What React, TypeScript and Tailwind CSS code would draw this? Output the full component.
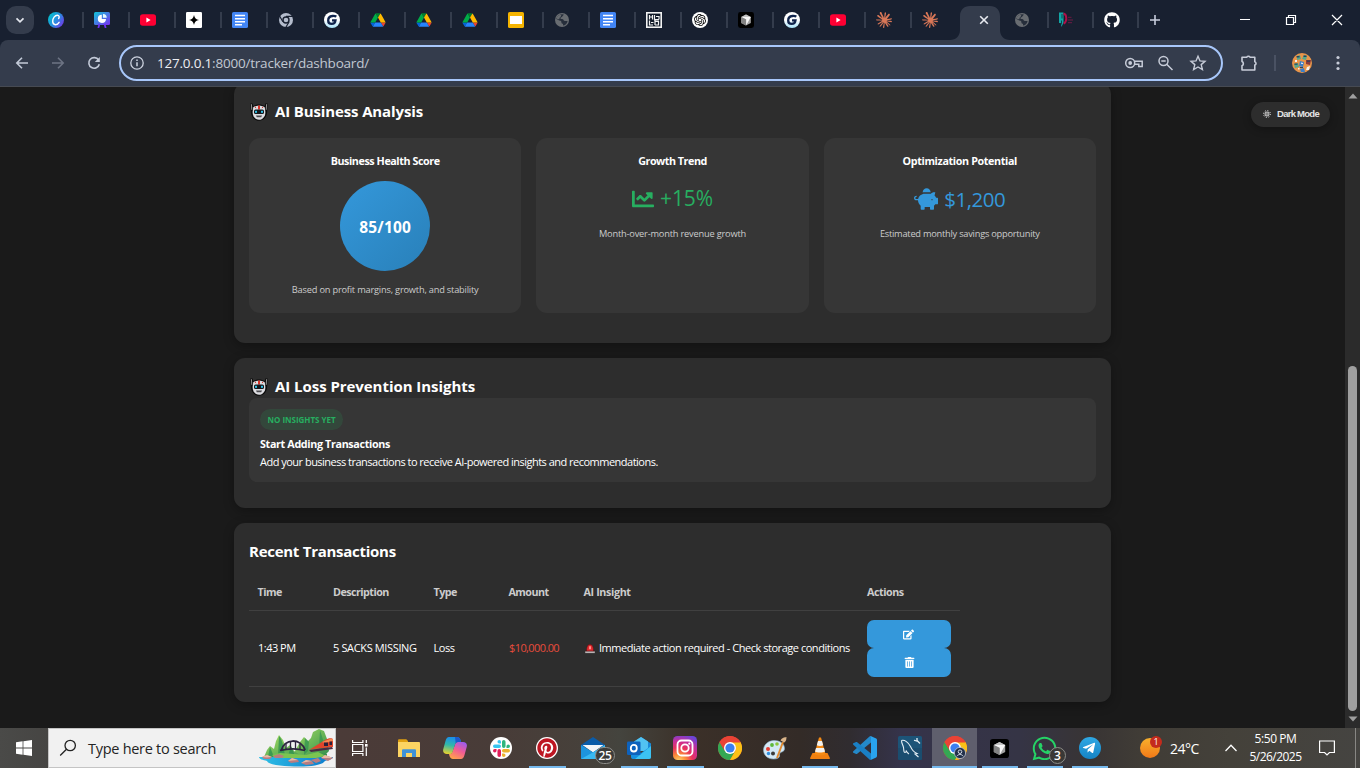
import type { ReactNode } from "react";
import { FaChartLine, FaPiggyBank, FaEdit, FaTrashAlt, FaGithub, FaPinterest, FaWhatsapp, FaTelegramPlane } from "react-icons/fa";
import { SiOpenai, SiClaude } from "react-icons/si";

/* ---------- favicons ---------- */

function Canva() {
  return (
    <svg viewBox="0 0 16 16" className="size-4">
      <defs>
        <linearGradient id="canva" x1="0" y1="0.2" x2="1" y2="0.9">
          <stop offset="0" stopColor="#00c4cc" />
          <stop offset="0.5" stopColor="#2a8be0" />
          <stop offset="1" stopColor="#7d2ae8" />
        </linearGradient>
      </defs>
      <circle cx="8" cy="8" r="8" fill="url(#canva)" />
      <path d="M10.600 6.500c1.100-1.400.6-3.200-1.200-3.200C6.900 3.300 4.700 6.200 4.700 9.300c0 2.200 1.100 3.400 2.700 3.400 1.700 0 2.900-1 3.700-2.400" fill="none" stroke="#fff" strokeWidth="1.400" strokeLinecap="round" />
    </svg>
  );
}

function Presentation() {
  return (
    <svg viewBox="0 0 16 16" className="size-4">
      <defs>
        <linearGradient id="pres" x1="0" y1="0" x2="1" y2="1">
          <stop offset="0" stopColor="#12c8d8" />
          <stop offset="1" stopColor="#7a2cf0" />
        </linearGradient>
      </defs>
      <rect width="16" height="13" rx="1.500" fill="url(#pres)" />
      <path d="M5.500 12 4.300 16M10.500 12l1.200 4" stroke="#6d2ff0" strokeWidth="1.800" />
      <path d="M7.800 2.700A4.100 4.100 0 1 0 12 7H7.800z" fill="#fff" />
      <path d="M9 2v3.800h3.700A3.700 3.700 0 0 0 9 2z" fill="#e4fbff" />
    </svg>
  );
}

function YouTube() {
  return (
    <svg viewBox="0 0 16 16" className="size-4">
      <rect y="2.200" width="16" height="11.600" rx="2.800" fill="#ff0033" />
      <path d="M6.400 5.600v4.800L10.600 8z" fill="#fff" />
    </svg>
  );
}

function Spark() {
  return (
    <svg viewBox="0 0 16 16" className="size-4">
      <rect width="16" height="16" rx="1.200" fill="#fff" />
      <path d="M8 3c.6 3 2 4.400 5 5-3 .6-4.400 2-5 5-.6-3-2-4.400-5-5 3-.6 4.400-2 5-5z" fill="#000" />
    </svg>
  );
}

function Docs() {
  return (
    <svg viewBox="0 0 16 16" className="size-4">
      <rect width="16" height="16" rx="1.600" fill="#4285f4" />
      <path d="M3 3.600h10M3 6.700h10M3 9.700h10M3 12.700h7" stroke="#fff" strokeWidth="1.500" />
    </svg>
  );
}

function ChromeMono() {
  return (
    <svg viewBox="0 0 16 16" className="size-4">
      <circle cx="8" cy="8" r="7" fill="#b4bccc" />
      <path d="M8 4.400h7M4.900 9.800 1.400 3.800M11.100 9.800 7.600 15.700" stroke="#182030" strokeWidth="1.200" />
      <circle cx="8" cy="8" r="3" fill="#b4bccc" stroke="#182030" strokeWidth="1.400" />
    </svg>
  );
}

function GLogo() {
  return (
    <svg viewBox="0 0 16 16" className="size-4">
      <defs>
        <linearGradient id="glogo" x1="0" y1="0" x2="0" y2="1">
          <stop offset="0.5" stopColor="#fff" />
          <stop offset="1" stopColor="#a8e4fa" />
        </linearGradient>
      </defs>
      <circle cx="8" cy="8" r="8" fill="url(#glogo)" />
      <path d="M12.400 4.500C11 3.900 9.600 3.900 8.400 4 5.900 4.300 4.200 6.100 4.200 8.400c0 2.200 1.500 3.500 3.500 3.500 2.100 0 3.500-1.200 3.800-3.500H8" fill="none" stroke="#10244c" strokeWidth="2.300" />
    </svg>
  );
}

function Drive() {
  return (
    <svg viewBox="-3 -5 93.300 88" className="size-4">
      <path d="m6.600 66.850 3.850 6.650c.8 1.400 1.950 2.500 3.300 3.300l13.750-23.800h-27.500c0 1.550.4 3.100 1.200 4.500z" fill="#0066da" />
      <path d="m43.650 25-13.750-23.800c-1.350.8-2.500 1.900-3.300 3.300l-25.400 44a9.060 9.060 0 0 0-1.200 4.500h27.500z" fill="#00ac47" />
      <path d="m73.550 76.800c1.350-.8 2.500-1.900 3.300-3.300l1.600-2.750 7.650-13.250c.8-1.400 1.200-2.950 1.200-4.500h-27.502l5.852 11.500z" fill="#ea4335" />
      <path d="m43.650 25 13.750-23.800c-1.350-.8-2.900-1.200-4.500-1.200h-18.500c-1.600 0-3.150.45-4.500 1.200z" fill="#00832d" />
      <path d="m59.800 53h-32.300l-13.750 23.800c1.350.8 2.900 1.200 4.500 1.200h50.800c1.600 0 3.150-.45 4.500-1.200z" fill="#2684fc" />
      <path d="m73.400 26.500-12.700-22c-.8-1.400-1.950-2.500-3.300-3.300l-13.750 23.800 16.150 28h27.450c0-1.550-.4-3.100-1.200-4.500z" fill="#ffba00" />
    </svg>
  );
}

function Slides() {
  return (
    <svg viewBox="0 0 16 16" className="size-4">
      <rect width="16" height="16" rx="1.600" fill="#f5b400" />
      <rect x="2" y="4" width="12" height="8" fill="#fff" />
    </svg>
  );
}

function Globe() {
  return (
    <svg viewBox="0 0 16 16" className="size-4">
      <circle cx="8" cy="8" r="7" fill="#686c71" />
      <path d="M9.500 2.200c.4 1.300-1 1.500-1.200 2.400-.2.800-1.800.4-1.900 1.500 0 .9.600 1 1.500 1 1.300-.1 1.600.7 1.900 1.400.3.600 1.200.4 2 .4h1.800c-.3 2.600-2.400 4.300-4.600 4.700v-1.800c-1.300 0-1.700-.8-1.600-1.900C7.200 8.300 5.600 8.600 4.300 7.900L2.400 7C2.900 4 5.500 2 9.500 2.200z" fill="#1b2331" opacity=".85" />
      <path d="M2.600 6c.9-2 2-2.800 3.600-3.300 1 .3 1.400.800.8 1.600-.8 1-1.800 1.600-1.600 2.900L3.500 7.300z" fill="#686c71" />
    </svg>
  );
}

function GridLogo() {
  return (
    <svg viewBox="0 0 16 16" className="size-4">
      <rect x=".8" y=".8" width="14.400" height="14.400" fill="#111a28" stroke="#f2f2f2" strokeWidth="1.600" />
      <path d="M3.500 3v4.500M3.500 5h3M6.500 3v4.500M8.500 3v4.500h4.500M10 4.500h3v3M3.500 8.500V13H7M5 10.500h2.500M9 8.500v4.500M9 9.500h3.500v3.500H9M8 8h5" fill="none" stroke="#f2f2f2" strokeWidth="1.200" />
    </svg>
  );
}

function OpenAi() {
  return (
    <span className="flex size-4 items-center justify-center rounded-full bg-white text-black">
      <SiOpenai className="size-[12px]" />
    </span>
  );
}

function Cube({ big = false }: { big?: boolean }) {
  return (
    <svg viewBox="0 0 16 16" className={big ? "size-[19px]" : "size-4"}>
      <rect width="16" height="16" rx="2.400" fill="#000" />
      <path d="M8 2.500 12.800 5v6L8 13.500 3.200 11V5z" fill="#a2a2a2" />
      <path d="M3.200 5 8 2.500 12.800 5 8 7z" fill="#c4c4c4" />
      <path d="M3.400 5h9.400L8.200 13.300V7.300z" fill="#f6f6f6" />
      <path d="M3.200 5 8 7.600V13.500L3.200 11z" fill="#828282" />
    </svg>
  );
}

function DE() {
  return (
    <svg viewBox="0 0 16 16" className="size-4">
      <path d="M0 .5h4.500v10L2.500 15 1.800 11H0z" fill="#12a5a5" />
      <path d="M3 2v4.500M2.500 8.500v4" stroke="#083a44" strokeWidth=".9" />
      <path d="M4.500 1.500c3.700 1 3.700 8 .2 10.300" fill="none" stroke="#b01048" strokeWidth="1.900" />
      <path d="M9 5.300h3.500M8.500 8h5.500M9 10.700h4" stroke="#6e1a44" strokeWidth="1" />
    </svg>
  );
}

function Tab({ children, narrow = false, bare = false }: { children: ReactNode; narrow?: boolean; bare?: boolean }) {
  return (
    <div className={"flex h-4 shrink-0 items-center justify-between pl-[10px] " + (narrow ? "w-[45px]" : "w-[46px]")}>
      {children}
      {!bare && <span className="h-4 w-[2px] bg-[#343c4c]" />}
    </div>
  );
}

function TabStrip() {
  return (
    <div className="flex h-10 items-center bg-[#182030]">
      <div className="ml-[6px] flex size-7 items-center justify-center rounded-[10px] bg-[#343c4c]">
        <svg viewBox="0 0 10 10" className="size-[10px]">
          <path d="M1.500 3.300 5 6.800l3.500-3.500" fill="none" stroke="#e3e6ee" strokeWidth="1.700" />
        </svg>
      </div>
      <div className="ml-[4px] flex">
        <Tab><Canva /></Tab>
        <Tab><Presentation /></Tab>
        <Tab><YouTube /></Tab>
        <Tab><Spark /></Tab>
        <Tab><Docs /></Tab>
        <Tab><ChromeMono /></Tab>
        <Tab><GLogo /></Tab>
        <Tab><Drive /></Tab>
        <Tab><Drive /></Tab>
        <Tab><Drive /></Tab>
        <Tab><Slides /></Tab>
        <Tab><Globe /></Tab>
        <Tab><Docs /></Tab>
        <Tab><GridLogo /></Tab>
        <Tab><OpenAi /></Tab>
        <Tab><Cube /></Tab>
        <Tab><GLogo /></Tab>
        <Tab><YouTube /></Tab>
        <Tab><SiClaude className="size-4 text-[#d97757]" /></Tab>
        <Tab bare><SiClaude className="size-4 text-[#d97757]" /></Tab>
      </div>
      <div className="relative -ml-[8px] mt-[6px] h-[34px] w-[60px] shrink-0">
        <svg viewBox="0 0 60 34" className="absolute inset-0 h-[34px] w-[60px]">
          <path d="M0 34c6 0 10-4 10-10V10C10 4 14 0 20 0h20c6 0 10 4 10 10v14c0 6 4 10 10 10z" fill="#343c4c" />
          <path d="M30.200 10.200l7.600 7.600M37.800 10.200l-7.600 7.600" stroke="#e8eaf0" strokeWidth="1.600" />
        </svg>
      </div>
      <div className="-ml-[6px] flex">
        <Tab narrow><Globe /></Tab>
        <Tab narrow><DE /></Tab>
        <Tab narrow><FaGithub className="size-4 text-white" /></Tab>
      </div>
      <svg viewBox="0 0 12 12" className="ml-[10px] size-3 shrink-0">
        <path d="M6 1v10M1 6h10" stroke="#c7cddc" strokeWidth="1.600" />
      </svg>
      <svg viewBox="0 0 104 14" className="ml-[79px] h-[14px] w-[104px] shrink-0">
        <path d="M0 6.500h10M46.500 4.500h7v7h-7zM48.500 4.500v-2h7v7h-2M92 2l10 10M102 2l-10 10" fill="none" stroke="#fff" strokeWidth="1.200" />
      </svg>
    </div>
  );
}

function Toolbar() {
  return (
    <div className="bg-[#182030]">
      <div className="flex h-[47px] items-center rounded-t-[8px] border-b border-[#464a52] bg-[#343c4c]">
        <svg viewBox="0 0 90 14" className="ml-[15px] h-[14px] w-[90px] shrink-0">
          <path d="M13 7H2M7 1.800 1.800 7 7 12.200" fill="none" stroke="#c3cad8" strokeWidth="1.600" />
          <path d="M37 7h11M43 1.800 48.200 7 43 12.200" fill="none" stroke="#6d7484" strokeWidth="1.600" />
          <path d="M83.600 4A5.300 5.300 0 1 0 84.300 8.200" fill="none" stroke="#c3cad8" strokeWidth="1.600" />
          <path d="M84.800 1v5h-5z" fill="#c3cad8" />
        </svg>
        <div className="ml-[14px] flex h-9 w-[1104px] shrink-0 items-center rounded-full border-2 border-[#a8c7fa] pl-[9px]">
          <svg viewBox="0 0 14 14" className="size-[14px]">
            <circle cx="7" cy="7" r="6.200" fill="none" stroke="#cdd3df" strokeWidth="1.300" />
            <path d="M7 6.200v4M7 3.600v1.500" stroke="#cdd3df" strokeWidth="1.500" />
          </svg>
          <span className="ml-[13px] whitespace-nowrap text-[13.5px] tracking-[-0.21px] text-[#c2c8d2]">
            <span className="text-[#eceef3]">127.0.0.1</span>:8000/tracker/dashboard/
          </span>
          <svg viewBox="0 0 84 18" className="ml-auto mr-[13px] h-[18px] w-[84px]" fill="none" stroke="#c7ccd8" strokeWidth="1.500">
            <circle cx="6.200" cy="9" r="4.500" />
            <circle cx="6.200" cy="9" r="1.900" fill="#c7ccd8" stroke="none" />
            <path d="M10.500 7.200h7.700v5.300h-3.400v-2.300h-4.300" />
            <circle cx="39.500" cy="7" r="4.500" />
            <path d="M37.300 7h4.400M42.700 10.200l5.800 5.800" />
            <path d="M74 2.200l2 4.700 5 .4-3.800 3.300 1.200 5L74 13l-4.400 2.600 1.200-5L67 7.300l5-.4z" strokeWidth="1.400" />
          </svg>
        </div>
        <svg viewBox="0 0 18 18" className="ml-[17px] size-[18px] shrink-0">
          <path d="M2 3.200h4.800a1.800 1.800 0 0 1 3.200 0h4.800v4.500a1.800 1.800 0 0 1 0 3.400v4.900H2v-4.200a2.300 2.300 0 0 0 0-4.200z" fill="none" stroke="#c7ccd8" strokeWidth="1.600" strokeLinejoin="round" />
        </svg>
        <span className="ml-[16px] h-4 w-[2px] bg-[#4a5263]" />
        <svg viewBox="0 0 20 20" className="ml-[16px] size-5 shrink-0">
          <circle cx="10" cy="10" r="10" fill="#e8954a" />
          <path d="M5 3l3-1 1 4-4 1zM12 2l3 1-1 4-4-1zM2 11l4-1 1 4-4 1z" fill="#54a88c" />
          <path d="M8 8l4 1-1 5-4-1zM8 16l4-1 1 4-4 0z" fill="#3c7fc8" />
          <path d="M14 7l5 0-1 5-4-1z" fill="#8c3a3c" />
          <path d="M15 14l3-1-1 4-3 0zM3 7h2v2H3zM9 9.500l2 .6v1l-2-.4zM6 15h1.500v1.500H6z" fill="#f3f0ea" />
          <path d="M4.500 3h3v1.500h-3zM11.500 2.500h3V4h-3zM2.500 10.500h3v1.200h-3zM15 7.500h3v1.200h-3zM8 14h3v1H8z" fill="#28445c" />
        </svg>
        <svg viewBox="0 0 4 16" className="ml-[24px] h-4 w-1 shrink-0" fill="#c7ccd8">
          <circle cx="2" cy="2.500" r="1.600" /><circle cx="2" cy="8" r="1.600" /><circle cx="2" cy="13.500" r="1.600" />
        </svg>
      </div>
    </div>
  );
}

/* ---------- dashboard ---------- */

function Robot() {
  return (
    <svg viewBox="0 0 18 18" className="size-[18px]">
      <path d="M.4.400h2.200l.8 2.800C6 1 12 1 14.600 3.200L15.400.400h2.200l-.4 8.200c-.2 5.500-3.700 9.200-8.200 9.200S1 14.100.8 8.600z" fill="#0b0b0b" />
      <path d="M1.400 1.200l.4 5.600M16.600 1.200l-.4 5.600" stroke="#c9c9c9" strokeWidth=".7" />
      <path d="M3.200 4.500C5 2 13 2 14.800 4.500l.6 4.500c0 4.600-2.600 7.800-6.400 7.800S2.600 13.600 2.600 9z" fill="#dcdce0" />
      <path d="M8 2.500h2v4H8z" fill="#d8352a" />
      <path d="M4.800 4l1.300 1M13.200 4l-1.300 1" stroke="#d8352a" strokeWidth="1" />
      <rect x="4" y="6.600" width="10" height="4.400" rx="1.500" fill="#14181d" />
      <rect x="5" y="7.800" width="2" height="2" fill="#2fc4ea" />
      <rect x="11" y="7.800" width="2" height="2" fill="#2fc4ea" />
      <path d="M6 12.500h6l-.8 1.700H6.800z" fill="#4a4a4e" />
    </svg>
  );
}

function Siren() {
  return (
    <svg viewBox="0 0 12 10" className="h-[10px] w-3">
      <path d="M2.500 7.500C2.500 3 3.500.6 6 .6S9.500 3 9.500 7.500z" fill="#e02a2e" stroke="#5c0d10" strokeWidth=".6" />
      <path d="M5 2.300h2v3H5z" fill="#ff8c86" />
      <path d="M1.200 7.200h9.600v1.900H1.200z" fill="#b7b3b5" />
      <path d="M1.200 7h9.600" stroke="#551417" strokeWidth=".6" />
    </svg>
  );
}

function Card({ className = "", children }: { className?: string; children: ReactNode }) {
  return <section className={"flex flex-col rounded-[11px] bg-[#2d2d2d] px-[15px] pt-[15px] shadow-[0_3px_11px_rgba(0,0,0,0.3)] " + className}>{children}</section>;
}

function Metric({ title, tracking, children }: { title: string; tracking: string; children: ReactNode }) {
  return (
    <div className="flex h-[175px] flex-col items-center rounded-[11px] bg-[#363636] pt-[15px]">
      <h3 className={"h-4 text-[10.75px] leading-4 font-bold text-white " + tracking}>{title}</h3>
      {children}
    </div>
  );
}

const cols = "grid w-[711px] grid-cols-[75px_100.5px_75px_75px_283.5px_102px] items-center border-b border-[#404040]";

function Dashboard() {
  return (
    <div className="relative flex h-[641px] overflow-hidden bg-[#1a1a1a] whitespace-nowrap">
      <main className="ml-[234px] -mt-[4px] flex w-[877px] flex-col gap-[15px]">
        <Card className="h-[260px] shrink-0">
          <h2 className="flex h-[25px] items-center pt-[2px] pl-px text-[15px] font-bold tracking-[-0.13px] text-white">
            <Robot />
            <span className="ml-[7px]">AI Business Analysis</span>
          </h2>
          <div className="mt-[15px] grid grid-cols-3 gap-[15px]">
            <Metric title="Business Health Score" tracking="tracking-[-0.43px]">
              <div className="mt-3 flex size-[90px] items-center justify-center rounded-full bg-linear-135 from-[#3498db] to-[#2980b9] pt-[3px] text-[15.5px] font-bold tracking-[0.21px] text-white">
                85/100
              </div>
              <p className="mt-[11px] text-[9.25px] leading-[15px] font-medium tracking-[-0.2px] text-[#ccc]">Based on profit margins, growth, and stability</p>
            </Metric>
            <Metric title="Growth Trend" tracking="tracking-[-0.48px]">
              <div className="mt-[15px] flex h-[29px] items-center gap-[6px] pt-px text-[21px] tracking-[-0.1px] text-[#27ae60]">
                <FaChartLine className="size-[22px]" />
                <span>+15%</span>
              </div>
              <p className="mt-[13px] text-[9.25px] leading-[15px] font-medium tracking-[-0.19px] text-[#ccc]">Month-over-month revenue growth</p>
            </Metric>
            <Metric title="Optimization Potential" tracking="tracking-[-0.37px]">
              <div className="mt-[15px] flex h-[29px] items-center gap-[6px] pt-px text-[20.5px] tracking-[-0.5px] text-[#3498db]">
                <FaPiggyBank className="size-[24px]" />
                <span>$1,200</span>
              </div>
              <p className="mt-[13px] text-[9.25px] leading-[15px] font-medium tracking-[-0.24px] text-[#ccc]">Estimated monthly savings opportunity</p>
            </Metric>
          </div>
        </Card>

        <Card className="h-[150px] shrink-0">
          <h2 className="flex h-[25px] items-center pt-[2px] pl-px text-[15px] font-bold tracking-[-0.05px] text-white">
            <Robot />
            <span className="ml-[7px]">AI Loss Prevention Insights</span>
          </h2>
          <div className="flex h-[84px] flex-col items-start rounded-[8px] bg-[#363636] px-[11px] pt-[11px] text-[11px] text-white">
            <span className="flex h-[21px] w-[83px] items-center justify-center rounded-full bg-[#27ae60]/15 text-[8px] font-bold tracking-[-0.02px] text-[#27ae60]">NO INSIGHTS YET</span>
            <h3 className="mt-[6px] text-[10.75px] leading-[17px] font-bold tracking-[-0.35px]">Start Adding Transactions</h3>
            <p className="leading-[17px] tracking-[-0.51px]">Add your business transactions to receive AI-powered insights and recommendations.</p>
          </div>
        </Card>

        <Card className="h-[179px] shrink-0">
          <h2 className="flex h-[25px] items-center pt-[2px] text-[15px] font-bold tracking-[-0.27px] text-white">Recent Transactions</h2>
          <div className="mt-[11px] text-[11px] text-white">
            <div className={cols + " h-[37px] text-[10.75px] font-bold tracking-[-0.55px] text-[#ccc]"}>
              <span className="pl-[8.500px]">Time</span>
              <span className="pl-[9px]">Description</span>
              <span className="pl-[9px]">Type</span>
              <span className="pl-[9px]">Amount</span>
              <span className="pl-[9px] tracking-[-0.37px]">AI Insight</span>
              <span className="pl-[9px] tracking-[-0.46px]">Actions</span>
            </div>
            <div className={cols + " h-[76px]"}>
              <span className="pl-[9px] tracking-[-0.5px]">1:43 PM</span>
              <span className="pl-[9px] tracking-[-0.36px]">5 SACKS MISSING</span>
              <span className="pl-[9px] tracking-[-0.46px]">Loss</span>
              <span className="pl-[9.500px] font-medium tracking-[-0.6px] text-[#e74c3c]">$10,000.00</span>
              <span className="flex items-center gap-[3px] pl-[9.500px] tracking-[-0.46px]">
                <Siren />
                <span>Immediate action required - Check storage conditions</span>
              </span>
              <span className="flex flex-col pl-[9px]">
                <button className="flex h-[28px] w-[84px] items-center justify-center rounded-[7px] bg-[#3498db] text-white"><FaEdit className="mr-px size-[11px]" /></button>
                <button className="flex h-[29px] w-[84px] items-center justify-center rounded-[7px] bg-[#3498db] text-white"><FaTrashAlt className="size-[11px]" /></button>
              </span>
            </div>
          </div>
        </Card>
      </main>

      <button className="absolute top-[15px] left-[1251px] flex h-[25px] w-[79px] items-center rounded-full bg-[#2d2d2d] pl-[12px] font-['Liberation_Sans',sans-serif] text-[9.5px] font-bold tracking-[-0.73px] text-[#e4e4e4] shadow-[0_2px_8px_rgba(0,0,0,0.3)]">
        <svg viewBox="0 0 8 8" className="mb-px size-2" fill="none" stroke="#eee">
          <circle cx="4" cy="4" r="2" strokeWidth=".9" />
          <circle cx="4" cy="4" r="3.400" strokeWidth="1" strokeDasharray="1.100 1.570" />
          <circle cx="4" cy="4" r=".8" fill="#eee" stroke="none" />
        </svg>
        <span className="ml-[6px]">Dark Mode</span>
      </button>

      <div className="ml-auto flex w-[15px] flex-col items-center bg-[#2b2b2b]">
        <svg viewBox="0 0 10 6" className="mt-[6px] h-[6px] w-[10px]"><path d="M.500 5.500 5 .5l4.500 5z" fill="#9f9f9f" /></svg>
        <div className="mt-[267px] h-[345px] w-[9px] rounded-full bg-[#9f9f9f]" />
        <svg viewBox="0 0 10 6" className="mt-[5px] h-[6px] w-[10px]"><path d="M.500 .5 5 5.500 9.500 .5z" fill="#9f9f9f" /></svg>
      </div>
    </div>
  );
}

/* ---------- taskbar ---------- */

function Scenery() {
  return (
    <svg viewBox="0 0 75 38" className="mb-px h-[38px] w-[75px]">
      <defs>
        <linearGradient id="water" x1="0" y1="0" x2="1" y2="0">
          <stop offset="0" stopColor="#2fc0e6" /><stop offset="1" stopColor="#0b78cc" />
        </linearGradient>
        <linearGradient id="hill" x1="0" y1="0" x2="1" y2="1">
          <stop offset="0" stopColor="#a4dd62" /><stop offset="1" stopColor="#2e8b4c" />
        </linearGradient>
      </defs>
      <path d="M36 22 41 13l4-5 4 4 3-3 2-6 6-3 5 2 3 8 2 12-8 8H34z" fill="url(#hill)" />
      <path d="M5 28 8 21l3-4 4 3 2-8 3-6 4 5 3 8 4-3 4 6 6 4 12 0 9-4 6 3v5z" fill="url(#hill)" />
      <path d="M20 7c3 3 4 9 5 13l1 8h-7zM11 18l4 10H9zM32 17l4 10h-7z" fill="#2f9150" opacity=".8" />
      <path d="M46 9l4 4-1 9-4 4zM61 1l4 13-5 6z" fill="#2f9150" opacity=".7" />
      <path d="M50 21 66 11c3-2 7-2 8-1v8L54 20z" fill="#e0452c" />
      <path d="M63 13l8-3 3 0v2l-8 2z" fill="#f68a52" />
      <path d="M65 13.500h4v3.500h-4zM70.500 12.500H73v3.500h-2.500z" fill="#2b1f3a" />
      <path d="M50 21 73 18l1 2-22 3z" fill="#4a2a44" />
      <path d="M22 22C25 9 42 9 46 21" fill="none" stroke="#2e2440" strokeWidth="2" />
      <path d="M21 21.500c8-2 18-2 25 0" fill="none" stroke="#2e2440" strokeWidth="1.600" />
      <path d="M27 15v6M31.500 12.500v8M36.500 12.500v8M41 15v6" stroke="#2e2440" strokeWidth="1.300" />
      <path d="M0 28h74c0 2-5 3-8 4-3 4-12 5.500-26 5.500S10 36.500 8 32c-4-1-8-2-8-4z" fill="url(#water)" />
      <path d="M13 26l8-2 14 1 12 1 12-3 8 4-10 2H16z" fill="#7cc450" />
      <path d="M3 28l5-2 5 2-2 2H5zM14 27l6-2 5 2-2 2h-7zM29 32l4-3 6 2 1 2-8 1zM42 34l5-3 6 1 2 3-8 1zM52 31l7-2 3 3-5 2zM62 29l4-3 8 3-5 3z" fill="#b87c80" />
      <path d="M3 28l5-2 5 2-5 .5zM29 32l4-3 6 2-6 .5zM42 34l5-3 6 1-6 1zM62 29l4-3 8 3-6 0z" fill="#eabca6" />
    </svg>
  );
}

function ChromeLogo() {
  return (
    <svg viewBox="0 0 24 24" className="size-6">
      <circle cx="12" cy="12" r="12" fill="#ea4335" />
      <path d="M1.600 6A12 12 0 0 0 12 24l5.200-9L12 12H5.100z" fill="#34a853" />
      <path d="M22.400 6A12 12 0 0 1 12 24l5.200-9 .8-4L12 6.500V6z" fill="#fbc116" />
      <path d="M12 0a12 12 0 0 1 10.400 6.500H12L6.800 15 1.600 6A12 12 0 0 1 12 0z" fill="#ea4335" />
      <circle cx="12" cy="12" r="6" fill="#fff" />
      <circle cx="12" cy="12" r="4.600" fill="#3b7ff0" />
    </svg>
  );
}

function Explorer() {
  return (
    <svg viewBox="0 0 22 18" className="h-[18px] w-[22px]">
      <path d="M0 1.500C0 .7.500.2 1.300.2h7L10 2v4H0z" fill="#e0a010" />
      <path d="M0 3h20.800c.7 0 1.200.5 1.200 1.200V18H0z" fill="#fcd462" />
      <path d="M4 11.500c0-.8.500-1.300 1.300-1.300h11.400c.8 0 1.300.5 1.300 1.300V18h-4v-4H8v4H4z" fill="#3f92d8" />
    </svg>
  );
}

function Copilot() {
  return (
    <svg viewBox="0 0 24 22" className="h-[22px] w-6">
      <defs>
        <linearGradient id="cpA" x1="0.3" y1="0" x2="0.1" y2="1">
          <stop offset="0" stopColor="#1b8fe8" /><stop offset="0.45" stopColor="#32b8a8" /><stop offset="1" stopColor="#f2d327" />
        </linearGradient>
        <linearGradient id="cpB" x1="0.8" y1="0" x2="0.3" y2="1">
          <stop offset="0" stopColor="#9a5cf0" /><stop offset="0.5" stopColor="#f25c94" /><stop offset="1" stopColor="#ffa04c" />
        </linearGradient>
      </defs>
      <path d="M18 22h-8c-2 0-3-1.500-3.500-3L6 17c2 0 3-.8 3.500-2.500L12 7.500C12.500 6 13.500 5 15 5h5c3 0 4.500 2 3.700 5l-2.200 8c-.7 2.500-1.800 4-3.500 4z" fill="url(#cpB)" />
      <path d="M6 0h8c2 0 3 1.500 3.500 3l.5 2h-3c-1.500 0-2.500 1-3 2.500L9.500 15c-.5 1.500-1.500 2-3 2H4c-3 0-4.500-2-3.700-5L2.500 4C3.200 1.500 4.300 0 6 0z" fill="url(#cpA)" />
      <path d="M12 0h2c2 0 3 1.500 3.500 3l.5 2h-3c-1 0-1.800.5-2.300 1.300z" fill="#1c58cc" />
    </svg>
  );
}

function Slack() {
  return (
    <span className="flex size-[22px] items-center justify-center rounded-full bg-white">
      <svg viewBox="0 0 24 24" className="size-[17px]">
        <path d="M8.800 0a2.500 2.500 0 1 0 0 5h2.500V2.500A2.500 2.500 0 0 0 8.800 0zm0 6.300H2.500a2.500 2.500 0 0 0 0 5h6.300a2.500 2.500 0 0 0 0-5z" fill="#36c5f0" />
        <path d="M24 8.800a2.500 2.500 0 1 0-5 0v2.500h2.500A2.500 2.500 0 0 0 24 8.800zm-6.300 0V2.500a2.500 2.500 0 0 0-5 0v6.300a2.500 2.500 0 0 0 5 0z" fill="#2eb67d" />
        <path d="M15.200 24a2.500 2.500 0 1 0 0-5h-2.500v2.500a2.500 2.500 0 0 0 2.500 2.500zm0-6.300h6.300a2.500 2.500 0 0 0 0-5h-6.300a2.500 2.500 0 0 0 0 5z" fill="#ecb22e" />
        <path d="M0 15.200a2.500 2.500 0 1 0 5 0v-2.500H2.500A2.500 2.500 0 0 0 0 15.200zm6.300 0v6.300a2.500 2.500 0 0 0 5 0v-6.300a2.500 2.500 0 0 0-5 0z" fill="#e01e5a" />
      </svg>
    </span>
  );
}

function Mail() {
  return (
    <svg viewBox="0 0 24 22" className="h-[22px] w-6">
      <path d="M0 8 12 0l12 8v3H0z" fill="#0b5ca8" />
      <path d="M1.500 8h21L12 15.500z" fill="#f4f6f8" />
      <path d="M0 8v14h24V8l-12 7.200z" fill="#1d94dd" />
      <path d="M0 22 14 14.200 24 8V22z" fill="#38b8f2" />
    </svg>
  );
}

function Outlook() {
  return (
    <svg viewBox="0 0 24 22" className="h-[22px] w-6">
      <path d="M4 7 14 0l10 6.500V11H4z" fill="#1a8ad8" />
      <path d="M7 4.500 14 0l7 4.500V14H7z" fill="#52c3f2" />
      <path d="M4 11.500 14 16l10-7v11c0 1.200-.8 2-2 2H6c-1.200 0-2-.8-2-2z" fill="#1590e0" />
      <path d="M24 9v11c0 1.200-.8 2-2 2H8z" fill="#3cc3f3" />
      <rect y="4.500" width="13.500" height="13.500" rx="1.200" fill="#0d62bd" />
      <ellipse cx="6.800" cy="11.200" rx="3" ry="3.300" fill="none" stroke="#fff" strokeWidth="1.800" />
    </svg>
  );
}

function Instagram() {
  return (
    <svg viewBox="0 0 24 24" className="size-6">
      <defs>
        <radialGradient id="ig" cx="0.25" cy="1.050" r="1.150">
          <stop offset="0" stopColor="#fed870" /><stop offset="0.25" stopColor="#fb8c38" />
          <stop offset="0.5" stopColor="#e8325f" /><stop offset="0.75" stopColor="#c52f9c" /><stop offset="1" stopColor="#6b45d8" />
        </radialGradient>
      </defs>
      <rect width="24" height="24" rx="4.500" fill="url(#ig)" />
      <rect x="4.500" y="4.500" width="15" height="15" rx="4" fill="none" stroke="#fff" strokeWidth="1.800" />
      <circle cx="12" cy="12" r="3.700" fill="none" stroke="#fff" strokeWidth="1.800" />
      <circle cx="16.300" cy="7.700" r="1.100" fill="#fff" />
    </svg>
  );
}

function Paint() {
  return (
    <svg viewBox="0 0 24 24" className="size-6">
      <path d="M11 4.500c6 0 10.500 3 10.500 8 0 3.500-3 3-4.500 4.500s.5 2.500-1 4.300c-1 1.200-3 1.700-5.500 1.700C4.500 23 .5 19 .5 14S5 4.500 11 4.500z" fill="#d3e8f5" stroke="#8fb4cc" strokeWidth=".6" />
      <circle cx="5" cy="13" r="2" fill="#e23b32" /><circle cx="9" cy="9" r="1.900" fill="#5cb83c" />
      <circle cx="14" cy="8" r="1.800" fill="#8cc63c" /><circle cx="5.500" cy="17.500" r="1.700" fill="#2f8fe0" />
      <circle cx="10" cy="17.500" r="2" fill="#3b3a38" />
      <path d="M20 6 14 22" stroke="#e08a30" strokeWidth="2" />
      <path d="M17.500 4.500C19 1.500 21.500 1.500 23.500 1c-.2 2 0 4-2.200 5.500z" fill="#d9b48a" />
    </svg>
  );
}

function Vlc() {
  return (
    <svg viewBox="0 0 20 22" className="h-[22px] w-5">
      <path d="M2.500 16h15l2.300 4.700c.2.700 0 1.300-.8 1.300H1c-.8 0-1-.6-.8-1.300z" fill="#f08010" />
      <path d="M9 .5h2L15.500 17c-1 1.800-10 1.800-11 0z" fill="#f58a14" />
      <path d="M8 4h4l1.200 4.300c-1.500.8-4.900.8-6.400 0zM6 11h8l1 3.500c-2 1.300-8 1.300-10 0z" fill="#f1f1ef" />
    </svg>
  );
}

function VsCode() {
  return (
    <svg viewBox="0 0 24 24" className="size-6">
      <path d="M18 .2v6.350L3.900 17.900c-.4.3-.9.300-1.300-.06L.3 16.700a1 1 0 0 1 0-1.450L16.500.5c.4-.3.900-.45 1.500-.3z" fill="#2489ca" />
      <path d="M18 23.800v-6.350L3.900 6.100c-.4-.3-.9-.3-1.300.06L.3 7.300a1 1 0 0 0 0 1.450L16.500 23.500c.4.3.9.45 1.500.3z" fill="#1a80c6" />
      <path d="M16.500 23.500c.5.4 1.200.5 1.700.2l4.950-2.300A1.500 1.500 0 0 0 24 20.060V3.940a1.500 1.500 0 0 0-.85-1.350L18.200.2c-.5-.2-1.200-.1-1.700.3.600-.4 1.500-.1 1.500.8v21.400c0 .9-.9 1.300-1.500.8z" fill="#29a3ee" />
    </svg>
  );
}

function MySql() {
  return (
    <svg viewBox="0 0 24 24" className="size-6">
      <rect width="24" height="24" rx="1.500" fill="#1c5478" />
      <path d="M0 12h24v12H0z" fill="#174565" opacity=".5" />
      <path d="M3.500 4.500c3-1 7 2 9 6 1.500 3.500 3 5.500 6.500 7l-2 .5 3.500 3M3.500 4.500c0 3 1.500 4.500 2 7s0 5 1.500 5 1-2 1-2c1 2 2 3 3 3.500" fill="none" stroke="#e4eef4" strokeWidth="1.100" />
      <path d="M16 4.500c1.500-.5 2 1 3.500.5l2.500 2.500M19 2v3" fill="none" stroke="#e4eef4" strokeWidth="1.300" />
    </svg>
  );
}

function Task({ children, narrow = false, on = false, active = false }: { children: ReactNode; narrow?: boolean; on?: boolean; active?: boolean }) {
  return (
    <div className={"relative flex h-10 shrink-0 items-center justify-center " + (narrow ? "w-[45px] " : "w-[46px] ") + (active ? "bg-[#5f5f6d]" : "")}>
      {children}
      {on && <span className={"absolute bottom-0 h-[2px] bg-[#76b9ed] " + (active ? "inset-x-0" : "inset-x-[4.500px]")} />}
    </div>
  );
}

function Taskbar() {
  return (
    <footer className="flex h-10 items-center bg-[linear-gradient(90deg,#4a4a48_0px,#464543_48px,#4b3b38_340px,#483c38_500px,#46413b_590px,#44443e_620px,#3b3028_690px,#332b27_800px,#302c30_850px,#35334a_900px,#353445_1020px,#383434_1090px,#403c36_1140px,#44413a_1230px,#454441_1360px)] whitespace-nowrap text-white">
      <div className="flex w-12 justify-center">
        <svg viewBox="0 0 16 16" className="size-4" fill="#fff">
          <path d="M0 2.300 6.600 1.300V7.600H0zM7.400 1.200 16 0v7.600H7.400zM0 8.400h6.600v6.300L0 13.700zM7.400 8.400H16V16l-8.600-1.200z" />
        </svg>
      </div>
      <div className="flex h-10 w-72 items-center border border-[#c4c4c4] bg-[#f1f1f1] pl-[10px] text-[#242424]">
        <svg viewBox="0 0 18 18" className="size-[18px]" fill="none" stroke="#222" strokeWidth="1.300">
          <circle cx="11.200" cy="6.500" r="5.200" /><path d="M7.500 10.200 1.200 16.500" />
        </svg>
        <span className="ml-[11px] pt-[2px] text-[14.5px] tracking-[-0.28px]">Type here to search</span>
        <span className="ml-auto mr-px"><Scenery /></span>
      </div>
      <div className="flex w-[50px] justify-center">
        <svg viewBox="0 0 16 16" className="mr-[2px] size-4" fill="none" stroke="#fff" strokeWidth="1.200">
          <path d="M.600 0v2.500h10.300V0M.600 4.500h10.300v7H.600zM.600 16v-2.500h10.300V16M14.300 0v3M14.300 7.500V16" />
          <path d="M13 4h2.600v2.600H13z" fill="#fff" stroke="none" />
        </svg>
      </div>
      <Task><Explorer /></Task>
      <Task><Copilot /></Task>
      <Task><Slack /></Task>
      <Task on>
        <span className="flex size-[22px] items-center justify-center rounded-full bg-white text-[#bd1622]"><FaPinterest className="size-[20px]" /></span>
      </Task>
      <Task>
        <span className="mr-px"><Mail /></span>
        <span className="absolute top-[19px] left-[25px] flex h-[17px] w-[20px] items-center justify-center rounded-full border border-[#8c8c88] bg-[#3c3c3a] text-[12px] font-semibold tracking-[-0.37px]">25</span>
      </Task>
      <Task on><Outlook /></Task>
      <Task on><Instagram /></Task>
      <div className="-ml-px flex">
        <Task narrow><ChromeLogo /></Task>
        <Task narrow><Paint /></Task>
        <Task narrow on><Vlc /></Task>
        <Task narrow><VsCode /></Task>
        <Task narrow><MySql /></Task>
        <Task narrow on active>
          <ChromeLogo />
          <svg viewBox="0 0 12 12" className="absolute top-[19px] left-[22px] size-3">
            <circle cx="6" cy="6" r="5.600" fill="#22304a" stroke="#b8c0d0" strokeWidth=".8" />
            <circle cx="6" cy="4.700" r="1.800" fill="none" stroke="#e0e5ee" strokeWidth=".9" />
            <path d="M2.800 9.200c1.500-2.300 4.900-2.300 6.400 0" fill="none" stroke="#e0e5ee" strokeWidth=".9" />
          </svg>
        </Task>
        <Task narrow on><Cube big /></Task>
        <Task narrow on>
          <FaWhatsapp className="size-[27px] text-[#25d366]" />
          <span className="absolute top-[19px] left-[27px] flex size-[17px] items-center justify-center rounded-full border border-[#8c8c88] bg-[#3a3836] text-[12px] font-semibold">3</span>
        </Task>
        <Task narrow on>
          <span className="flex size-[22px] items-center justify-center rounded-full bg-linear-to-b from-[#2fa8e4] to-[#1583c4]"><FaTelegramPlane className="mr-px size-[14px]" /></span>
        </Task>
      </div>
      <span className="relative ml-[28px] size-5 rounded-full bg-linear-to-b from-[#f8b02c] to-[#f07818]">
        <span className="absolute -top-[2px] left-[10px] flex size-3 items-center justify-center rounded-full bg-[#c42b1c] text-[9px]">1</span>
      </span>
      <span className="ml-[10px] w-[55px] text-[14px] tracking-[-0.46px]">24°C</span>
      <svg viewBox="0 0 12 8" className="h-2 w-3"><path d="M.500 7 6 1.300 11.500 7" fill="none" stroke="#fff" strokeWidth="1.300" /></svg>
      <div className="ml-[12px] flex w-[53px] flex-col items-center text-[12px] leading-[18px]">
        <span className="tracking-[-0.41px]">5:50 PM</span>
        <span className="tracking-[-0.54px]">5/26/2025</span>
      </div>
      <svg viewBox="0 0 16 16" className="ml-[17px] size-4" fill="none" stroke="#fff" strokeWidth="1.200">
        <path d="M.600 1h14.800v11.500h-5l-2.400 2.500-2.400-2.500h-5z" />
      </svg>
      <span className="ml-auto mr-1 h-10 w-px bg-[#888784]" />
    </footer>
  );
}

export default function App() {
  return (
    <div className="flex h-[768px] w-[1360px] flex-col overflow-hidden bg-[#1a1a1a] font-['Open_Sans','Noto_Sans',sans-serif]">
      <TabStrip />
      <Toolbar />
      <Dashboard />
      <Taskbar />
    </div>
  );
}
